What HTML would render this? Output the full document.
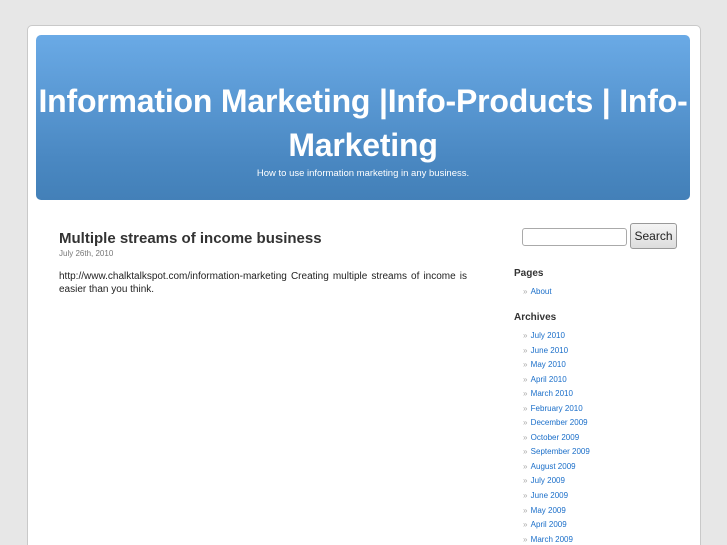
<!DOCTYPE html>
<html style="overflow:hidden"><head><style>
body{margin:0;background:#e7e7e7;font-family:"Liberation Sans",sans-serif;width:727px;height:545px;overflow:hidden;position:relative}
#page{position:absolute;left:27px;top:25px;width:672px;height:525px;background:#fff;border:1px solid #c9c9c9;border-radius:5px}
#hdr{position:absolute;left:36px;top:35px;width:654px;height:165px;border-radius:5px;background:linear-gradient(#6aaae6,#4a88c2 75%,#4380b8);text-align:center;color:#fff}
#hdr h1{margin:0;position:absolute;top:44px;left:0;width:654px;font-size:32px;line-height:44px;font-weight:bold;letter-spacing:-0.2px}
#hdr .d{position:absolute;top:133px;width:654px;left:0;font-size:9.5px}
.t{position:absolute;left:59px;top:230px;font-size:15px;font-weight:bold;color:#333}
.dt{position:absolute;left:59px;top:249px;font-size:8px;color:#777}
.bd{position:absolute;left:59px;top:270px;width:408px;font-size:10px;line-height:13px;color:#222;text-align:justify}
input{position:absolute;left:522px;top:228px;width:105px;height:18px;box-sizing:border-box;border:1px solid #aaa;border-radius:3px;margin:0}
.btn{position:absolute;left:630px;top:223px;width:47px;height:26px;box-sizing:border-box;border:1px solid #999;border-radius:3px;background:linear-gradient(#f4f4f4,#ddd);font-size:12px;color:#222;text-align:center;line-height:24px}
h2{position:absolute;left:514px;margin:0;font-size:10px;font-weight:bold;color:#333}
ul{position:absolute;left:523px;margin:0;padding:0;list-style:none;font-size:8px;line-height:14.55px}
ul li{color:#aaa}ul li span{color:#1a6ec9;margin-left:1px}
</style></head><body>
<div id="page"></div>
<div id="hdr"><h1>Information Marketing |Info-Products | Info-<br>Marketing</h1><div class="d">How to use information marketing in any business.</div></div>
<div class="t">Multiple streams of income business</div>
<div class="dt">July 26th, 2010</div>
<div class="bd">http://www.chalktalkspot.com/information-marketing Creating multiple streams of income is easier than you think.</div>
<input type="text"><div class="btn">Search</div>
<h2 style="top:268px">Pages</h2>
<ul style="top:285px"><li>» <span>About</span></li></ul>
<h2 style="top:312px">Archives</h2>
<ul style="top:329px">
<li>» <span>July 2010</span></li><li>» <span>June 2010</span></li><li>» <span>May 2010</span></li><li>» <span>April 2010</span></li><li>» <span>March 2010</span></li><li>» <span>February 2010</span></li><li>» <span>December 2009</span></li><li>» <span>October 2009</span></li><li>» <span>September 2009</span></li><li>» <span>August 2009</span></li><li>» <span>July 2009</span></li><li>» <span>June 2009</span></li><li>» <span>May 2009</span></li><li>» <span>April 2009</span></li><li>» <span>March 2009</span></li>
</ul>
</body></html>
